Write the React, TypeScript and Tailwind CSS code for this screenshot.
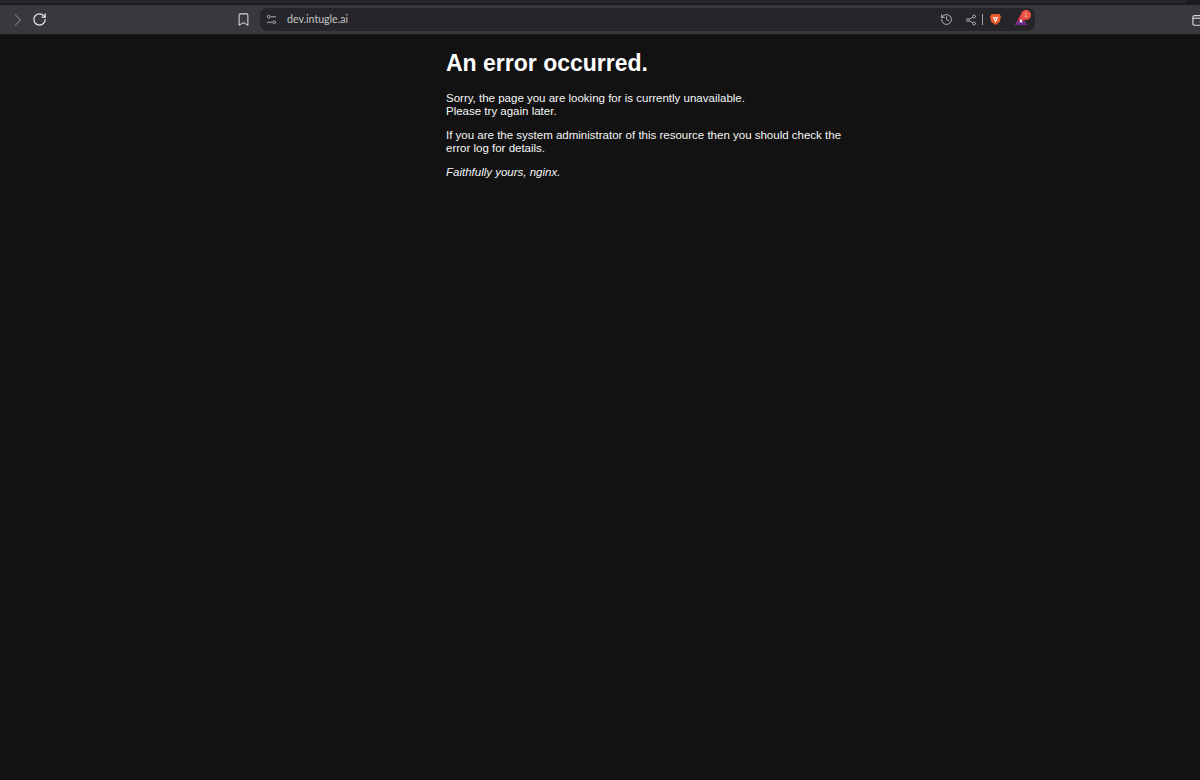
import { Bookmark, ChevronRight, History, RotateCw, Share2 } from "lucide-react";

const Toolbar = () => {
  return (
    <div className="bg-[#1c1c20] h-[35px] overflow-hidden">
      <div className="h-[3px] w-[1186px] bg-[#29292d] rounded-br-[3px]" />
      <div className="mt-[2px] h-[29px] flex items-center bg-[#38383d]">
        <ChevronRight className="w-[20px] h-[20px] ml-[8px] text-[#6f6f74]" strokeWidth={1.5} />
        <RotateCw className="w-[15px] h-[15px] ml-[4px] text-[#e8e8ea]" strokeWidth={2} />
        <Bookmark className="w-[15px] h-[15px] ml-[189px] text-[#d8d8da]" strokeWidth={1.7} />
        <div className="ml-[9px] w-[775px] h-[23px] rounded-[7px] bg-[#26262a] flex items-center">
          <svg viewBox="0 0 12 12" className="w-[11px] h-[11px] ml-[6px] text-[#b4b4b8]" fill="none" stroke="currentColor" strokeWidth="1">
            <circle cx="3" cy="3" r="1.5" />
            <path d="M5 3h6M1 9h6" />
            <circle cx="9" cy="9" r="1.5" />
          </svg>
          <span className="ml-[10px] text-[10.6px] text-[#c4c4c8] font-['Lato',sans-serif]">dev.intugle.ai</span>
          <History className="w-[13px] h-[13px] ml-auto text-[#c0c0c4]" strokeWidth={1.7} />
          <Share2 className="w-[12px] h-[12px] ml-[12px] text-[#a4a4a8]" strokeWidth={2} />
          <div className="w-px h-[11px] bg-[#a0a0a4] ml-[5px]" />
          <svg viewBox="0 0 24 24" className="w-[13px] h-[15px] ml-[6px]">
            <path d="M5 2h14l3 4-2 10-8 6-8-6L2 6z" fill="#f0592b" />
            <path d="M7 7l3 1h4l3-1-2 5-3 6-3-6z" fill="#ffffff" />
            <path d="M10 10h4l-2 4z" fill="#f0592b" />
          </svg>
          <div className="relative ml-[12px] mr-[7px]">
            <svg viewBox="0 0 24 24" className="w-[14px] h-[13px]">
              <path d="M12 2l11 20H1z" fill="#e0393e" />
              <path d="M1 22h22l-5-8H6z" fill="#6b2a8a" />
              <path d="M12 10l3 7H9z" fill="#ffffff" />
            </svg>
            <span className="absolute -top-[3px] -right-[3px] w-[10px] h-[10px] rounded-full bg-[#ee5240] text-[6px] leading-[10px] text-center text-[#f7c4b8]">1</span>
          </div>
        </div>
        <svg viewBox="0 0 16 16" className="w-[14px] h-[14px] ml-auto -mr-[6px] text-[#d8d8da]" fill="none" stroke="currentColor" strokeWidth="1.3">
          <rect x="1" y="3" width="14" height="11" rx="2" />
          <path d="M1 6h14" />
          <circle cx="11" cy="10" r="1.5" />
        </svg>
      </div>
    </div>
  );
};

export default function App() {
  return (
    <div className="w-[1200px] h-[780px] overflow-hidden bg-[#121212] text-[#f6f6f6] font-['Liberation_Sans',Arial,sans-serif]">
      <Toolbar />
      <div className="ml-[446px] w-[420px] pt-[14px] text-[11.5px] leading-[13px]">
        <h1 className="text-[23px] leading-[28px] font-bold text-white mb-[15px]">An error occurred.</h1>
        <p className="mb-[11px]">
          Sorry, the page you are looking for is currently unavailable.
          <br />
          Please try again later.
        </p>
        <p className="mb-[11px]">
          If you are the system administrator of this resource then you should check the
          <br />
          error log for details.
        </p>
        <p className="italic">Faithfully yours, nginx.</p>
      </div>
    </div>
  );
}
